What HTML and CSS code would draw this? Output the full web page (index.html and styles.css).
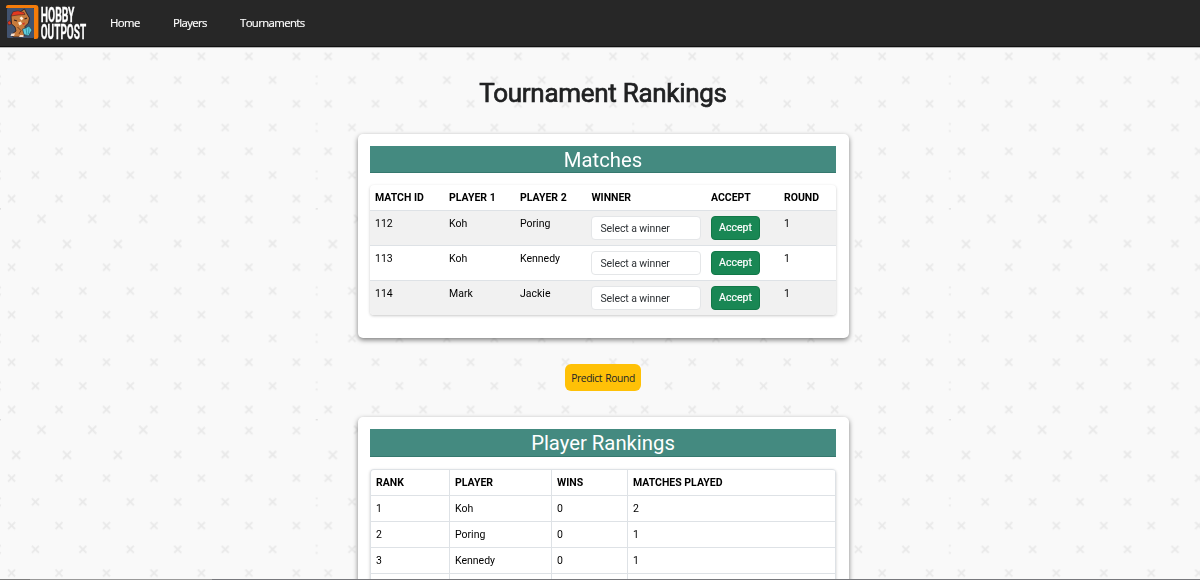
FILE: index.html
```html
<!DOCTYPE html>
<html lang="en">
<head>
<meta charset="utf-8">
<title>Hobby Outpost - Tournament Rankings</title>
<link rel="stylesheet" href="styles.css">
</head>
<body>
<svg class="backdrop" width="1200" height="580" aria-hidden="true">
  <defs>
    <path id="x" d="M-3.5-3.5 3.5 3.5M3.5-3.5-3.5 3.5"/>
    <path id="xl" d="M-4-4 4 4M4-4-4 4"/>
    <g id="row-a"><use href="#x" x="11.6"/><use href="#x" x="59"/><use href="#x" x="106.5"/><use href="#x" x="154"/><use href="#x" x="201.4"/><use href="#x" x="248.9"/><use href="#x" x="296.4"/></g>
    <g id="row-b"><path d="M-1-3 .8-4M-1 3 .8 4M315.8-3.5h1M315.8 3.5h1"/><use href="#x" x="35.4"/><use href="#x" x="82.8"/><use href="#x" x="130.3"/><use href="#x" x="177.7"/><use href="#x" x="225.2"/><use href="#x" x="272.6"/></g>
    <pattern id="tile" y="-2.5" width="316.6" height="210.9" patternUnits="userSpaceOnUse">
      <g class="marks">
        <use href="#xl" x="41.5" y="10.5"/><use href="#xl" x="92.3" y="10.5"/><use href="#xl" x="143.2" y="10.5"/>
        <use href="#x" x="201.4" y="11.4"/><use href="#x" x="248.9" y="11.4"/><use href="#x" x="296.4" y="11.4"/>
        <use href="#xl" x="16.2" y="35.7"/><use href="#xl" x="67" y="35.7"/><use href="#xl" x="117.8" y="35.7"/>
        <use href="#x" x="177.7" y="35.2"/><use href="#x" x="225.2" y="35.2"/><use href="#x" x="272.6" y="35.2"/>
        <use href="#row-a" y="58.8"/><use href="#row-b" y="82.6"/>
        <use href="#row-a" y="106.3"/><use href="#row-b" y="130"/>
        <use href="#row-a" y="153.8"/><use href="#row-b" y="177.5"/>
        <use href="#row-a" y="201.2"/>
      </g>
      <path class="tick" d="M0 .5h1M316 .5h.6"/>
    </pattern>
  </defs>
  <rect width="1200" height="580" fill="url(#tile)"/>
</svg>

<nav class="navbar">
  <svg class="logo" width="86" height="42" viewBox="4 3 86 42">
    <path d="M6 8Q6 6 8 6H36Q38.4 6 38.4 8.5V38Q38.4 40 36 40H34V9H6Z" fill="#f57c0a"/>
    <rect x="7" y="9" width="27" height="30" rx="1" fill="#42536f"/>
    <path d="M11 17 13 14 20 13 24.5 10 26.5 14 29.5 19 28.5 24 25 27.5 26 35 22 38H13L12 35 16 32 15 28 11.5 25Z" fill="#c77b3d" stroke="#2d2023" stroke-width=".9"/>
    <path d="M11 17 13 12.8 18 11.8 24 13.5 25 15.5 18 16ZM7.5 23 10 21.5 11.5 25 8.5 26Z" fill="#e3391f" stroke="#2d2023" stroke-width=".5"/>
    <path d="M19.5 19 21.5 17.5 23.5 19.5 21.5 21.5ZM18 23.5 21 22.5 22 25 19.5 26.5Z" fill="#fff0dc"/>
    <path d="M14 21 17 22M24.5 20 27 19" stroke="#32201f" stroke-width="1.3"/>
    <path d="M22 24.5 25 23.5 24 26Z" fill="#d92c22"/>
    <path d="M17.5 28 21 31.5 19 35" fill="none" stroke="#704022"/>
    <path d="M22.5 30 25.5 29 29 27 32 31 28.5 37 24 35.5Z" fill="#60cfdf" stroke="#22404c" stroke-width=".7"/>
    <path d="M26 29 27 36M29 28 28.5 35" stroke="#277d90" stroke-width=".7"/>
    <path d="M11.5 34.5H15L14 37H10.5ZM20 36H23.5V38H19Z" fill="#f4ded0"/>
    <text class="logo-text" x="40.7" y="23" textLength="33.8" lengthAdjust="spacingAndGlyphs">HOBBY</text>
    <text class="logo-text" x="40.7" y="40" textLength="45.4" lengthAdjust="spacingAndGlyphs">OUTPOST</text>
  </svg>
  <a class="nav-link home">Home</a>
  <a class="nav-link players">Players</a>
  <a class="nav-link">Tournaments</a>
</nav>

<main class="page">
  <h1 class="title">Tournament Rankings</h1>

  <section class="card matches-card">
    <h2 class="card-title">Matches</h2>
    <table class="table matches">
      <colgroup><col class="m1"><col class="m2"><col class="m3"><col class="m4"><col class="m5"><col></colgroup>
      <thead><tr><th>MATCH ID</th><th>PLAYER 1</th><th>PLAYER 2</th><th>WINNER</th><th>ACCEPT</th><th>ROUND</th></tr></thead>
      <tbody>
        <tr><td>112</td><td>Koh</td><td>Poring</td><td><div class="select">Select a winner</div></td><td><button class="accept">Accept</button></td><td>1</td></tr>
        <tr><td>113</td><td>Koh</td><td>Kennedy</td><td><div class="select">Select a winner</div></td><td><button class="accept">Accept</button></td><td>1</td></tr>
        <tr><td>114</td><td>Mark</td><td>Jackie</td><td><div class="select">Select a winner</div></td><td><button class="accept">Accept</button></td><td>1</td></tr>
      </tbody>
    </table>
  </section>

  <button class="predict">Predict Round</button>

  <section class="card rankings-card">
    <h2 class="card-title tall">Player Rankings</h2>
    <table class="table rankings">
      <colgroup><col class="r1"><col class="r2"><col class="r3"><col></colgroup>
      <thead><tr><th>RANK</th><th>PLAYER</th><th>WINS</th><th>MATCHES PLAYED</th></tr></thead>
      <tbody>
        <tr><td>1</td><td>Koh</td><td>0</td><td>2</td></tr>
        <tr><td>2</td><td>Poring</td><td>0</td><td>1</td></tr>
        <tr><td>3</td><td>Kennedy</td><td>0</td><td>1</td></tr>
        <tr><td></td><td></td><td></td><td></td></tr>
      </tbody>
    </table>
  </section>
</main>
<div class="bottom-edge"></div>
</body>
</html>
```
FILE: styles.css
```css
* { box-sizing: border-box; }
body {
  margin: 0;
  height: 580px;
  overflow: hidden;
  background: #f9f9f9;
  color: #212529;
  font-family: Roboto, "Liberation Sans", sans-serif;
}
.backdrop { position: fixed; inset: 0; z-index: -1; }
.marks { fill: none; stroke: #e9e9e9; stroke-width: 1.9; }
.tick { stroke: #cfcfcf; }

.navbar {
  display: flex;
  align-items: center;
  height: 47px;
  padding: 0 0 0 4px;
  background: #272727;
  border-bottom: 1px solid #111;
  box-shadow: 0 1px 0 #b5b5b5;
}
.logo { margin-right: 20px; overflow: visible; }
.logo-text { font: 700 20.5px Roboto, sans-serif; fill: #fff; stroke: #fff; stroke-width: .3; }
.nav-link {
  color: #fff;
  font: 11.4px/16px "Open Sans", sans-serif;
  letter-spacing: -0.63px;
  -webkit-text-stroke: .15px #fff;
}
.home { width: 63px; }
.players { width: 67px; }

.page {
  display: flex;
  flex-direction: column;
  align-items: center;
  padding-left: 7px;
}
.title {
  margin: 29px 1px 24px 0;
  color: #212223;
  font-size: 26px;
  line-height: 34px;
  font-weight: 400;
  letter-spacing: -0.3px;
  -webkit-text-stroke: .7px #212223;
}
.card {
  width: 491px;
  padding: 12px 13px 0 12px;
  background: #fff;
  border-radius: 5px;
  box-shadow: 0 2px 5px rgba(0, 0, 0, .5);
}
.matches-card { height: 204px; }
.rankings-card { height: 240px; }
.card-title {
  height: 27px;
  margin: 0 0 12px;
  background: #448a80;
  border-bottom: 1px solid #35786e;
  color: #fff;
  font-size: 20.3px;
  line-height: 28px;
  font-weight: 400;
  text-align: center;
}
.tall { height: 28px; }
.table {
  width: 466px;
  table-layout: fixed;
  border-spacing: 0;
  border-radius: 4px;
  overflow: hidden;
  box-shadow: 0 1px 3px rgba(0, 0, 0, .22);
  color: #000;
  font-size: 10.5px;
  line-height: 15px;
}
th, td { padding: 5px; text-align: left; vertical-align: top; border-bottom: 1px solid #dee2e6; }
th { height: 26px; font-weight: 700; }
.matches td { height: 35px; }
.matches tbody tr:last-child td { height: 34px; border-bottom: 0; }
.matches tbody tr:nth-child(odd) { background: #f1f1f1; }
.m1 { width: 74px; }
.m2 { width: 71px; }
.m3 { width: 71.4px; }
.m4 { width: 119.6px; }
.m5 { width: 73px; }
.select {
  width: 110px;
  height: 24px;
  padding: 0 8px;
  border: 1px solid #e4e6e8;
  border-radius: 4px;
  background: #fff;
  color: #2d3135;
  line-height: 23px;
  letter-spacing: -0.1px;
}
.accept {
  display: block;
  width: 49px;
  height: 24px;
  padding: 0;
  border: 1px solid #127848;
  border-radius: 4px;
  background: #198754;
  color: #fff;
  font: 400 10.5px/20px Roboto, sans-serif;
  -webkit-text-stroke: .2px #fff;
}
.predict {
  width: 76px;
  height: 27px;
  margin: 26px 1px 26px 0;
  padding: 0;
  border: 0;
  border-radius: 6px;
  background: #ffc107;
  color: #212529;
  font: 10.3px "Open Sans", sans-serif;
  letter-spacing: -0.4px;
  word-spacing: 1px;
}
.rankings { border: solid #dee2e6; border-width: 1px 0 0 1px; }
.rankings th, .rankings td { height: 26px; border-right: 1px solid #dee2e6; }
.r1 { width: 79px; }
.r2 { width: 102px; }
.r3 { width: 76px; }
.bottom-edge {
  position: fixed;
  left: 0;
  right: 0;
  bottom: 0;
  height: 1px;
  background: linear-gradient(90deg, #7c7c7c 30px, #9a9a9a 30px, #9a9a9a 212px, #77787c 212px);
}
```
